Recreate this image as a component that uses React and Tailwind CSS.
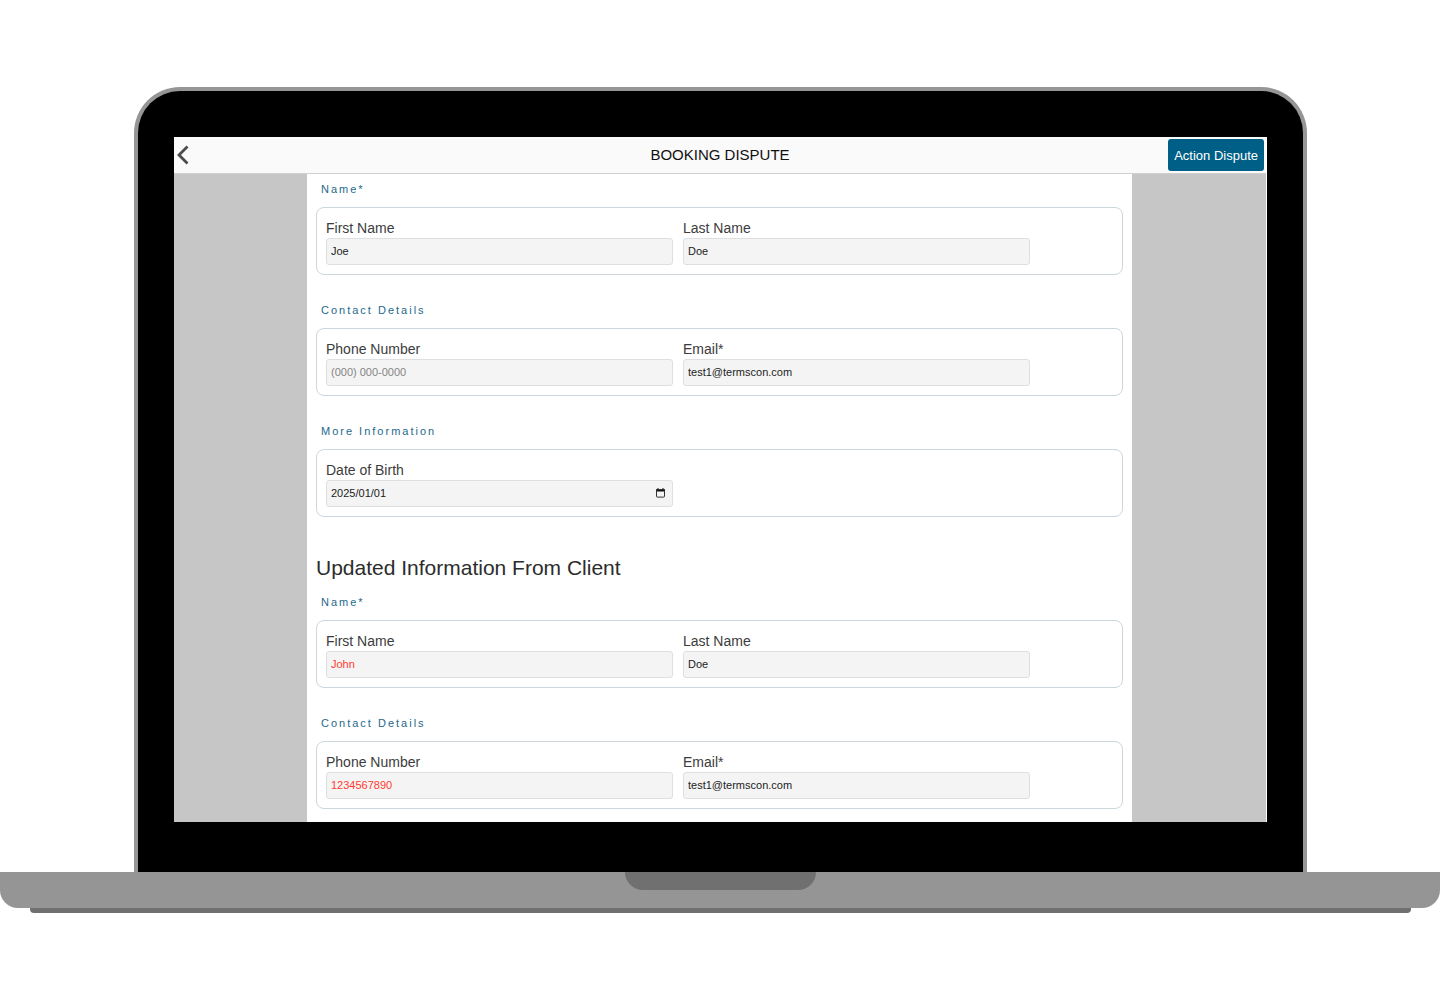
import { useId } from "react";

const Field = ({ label, value, placeholder, changed, type = "text" }) => {
  const id = useId();

  return (
    <div className="flex flex-col">
      <label htmlFor={id} className="text-sm leading-5 text-[#3c3c3c]">
        {label}
      </label>
      <input
        id={id}
        type={type}
        defaultValue={value}
        placeholder={placeholder}
        className={
          changed
            ? "h-[27px] w-full rounded-[3px] border border-[#dce0e3] bg-[#f4f4f4] px-1 pb-px text-[11px] text-[#ff3b30] outline-none"
            : "h-[27px] w-full rounded-[3px] border border-[#dce0e3] bg-[#f4f4f4] px-1 pb-px text-[11px] text-[#1c1c1c] outline-none placeholder:text-[#858585]"
        }
      />
    </div>
  );
};

const DateField = ({ label, value }) => {
  const id = useId();

  return (
    <div className="flex flex-col">
      <label htmlFor={id} className="text-sm leading-5 text-[#3c3c3c]">
        {label}
      </label>
      <div className="flex h-[27px] items-center rounded-[3px] border border-[#dce0e3] bg-[#f4f4f4] pl-1 pr-[7px] pb-px">
        <input
          id={id}
          type="text"
          defaultValue={value}
          className="min-w-0 flex-1 bg-transparent text-[11px] text-[#1c1c1c] outline-none"
        />
        <button type="button" aria-label="Pick a date">
          <svg width="9" height="10" viewBox="0 0 9 10" fill="none">
            <path d="M0 1.2h1.5V0h1v1.2h4V0h1v1.2H9V3.4H0z" fill="#111" />
            <rect x="0.5" y="1.7" width="8" height="7.4" rx="0.6" stroke="#333" />
          </svg>
        </button>
      </div>
    </div>
  );
};

const Section = ({ title, children }) => {
  return (
    <section>
      <h3 className="pl-[5px] pb-[9px] text-[11px] leading-[18px] tracking-[2px] text-[#24698c]">
        {title}
      </h3>
      <div className="grid h-[68px] grid-cols-2 gap-[10px] rounded-lg border border-[#ccd6db] pl-[9px] pr-[92px] pt-[10px]">
        {children}
      </div>
    </section>
  );
};

const DisputePage = () => {
  return (
    <div className="border-r border-white bg-[#c6c6c6]">
      <header className="grid h-[37px] grid-cols-[1fr_auto_1fr] items-center border-b border-[#cfcfcf] bg-[#fafafa]">
        <button type="button" aria-label="Back" className="justify-self-start pl-[3px]">
          <svg width="12" height="20" viewBox="0 0 12 20" fill="none">
            <path d="M10.5 1.5 2 10l8.5 8.5" stroke="#4a4a4a" strokeWidth="2.8" />
          </svg>
        </button>
        <h1 className="text-[15px] leading-5 text-[#111]">BOOKING DISPUTE</h1>
        <button
          type="button"
          className="mr-[2px] h-8 justify-self-end whitespace-nowrap rounded-[3px] bg-[#005f86] px-1.5 pt-px text-[13px] text-white"
        >
          Action Dispute
        </button>
      </header>

      <main className="ml-[133px] mr-[134px] bg-white px-[9px] pt-1.5 pb-[13px]">
        <div className="flex flex-col gap-[26px]">
          <Section title="Name*">
            <Field label="First Name" value="Joe" />
            <Field label="Last Name" value="Doe" />
          </Section>
          <Section title="Contact Details">
            <Field label="Phone Number" type="tel" placeholder="(000) 000-0000" />
            <Field label="Email*" type="email" value="test1@termscon.com" />
          </Section>
          <Section title="More Information">
            <DateField label="Date of Birth" value="2025/01/01" />
          </Section>
        </div>

        <h2 className="pt-[35px] pb-[9px] text-[21px] leading-8 text-[#2c2c2c]">
          Updated Information From Client
        </h2>
        <div className="flex flex-col gap-[26px]">
          <Section title="Name*">
            <Field label="First Name" value="John" changed />
            <Field label="Last Name" value="Doe" />
          </Section>
          <Section title="Contact Details">
            <Field label="Phone Number" type="tel" value="1234567890" changed />
            <Field label="Email*" type="email" value="test1@termscon.com" />
          </Section>
        </div>
      </main>
    </div>
  );
};

const App = () => {
  return (
    <div className="min-h-screen bg-white pt-[87px] font-['Liberation_Sans',Arial,sans-serif]">
      {/* lid */}
      <div className="ml-[134px] mr-[133px] rounded-t-[46px] border-4 border-b-0 border-[#969696] bg-black px-9 pt-[46px] pb-[50px]">
        <DisputePage />
      </div>

      {/* base */}
      <div className="flex h-9 justify-center rounded-b-[18px] bg-[#959595]">
        <div className="h-[18px] w-[191px] rounded-b-[18px] bg-[#707070]" />
      </div>
      <div className="ml-[30px] mr-[29px] h-[5px] rounded-b-[4px] bg-[#707070]" />
    </div>
  );
};

export default App;
